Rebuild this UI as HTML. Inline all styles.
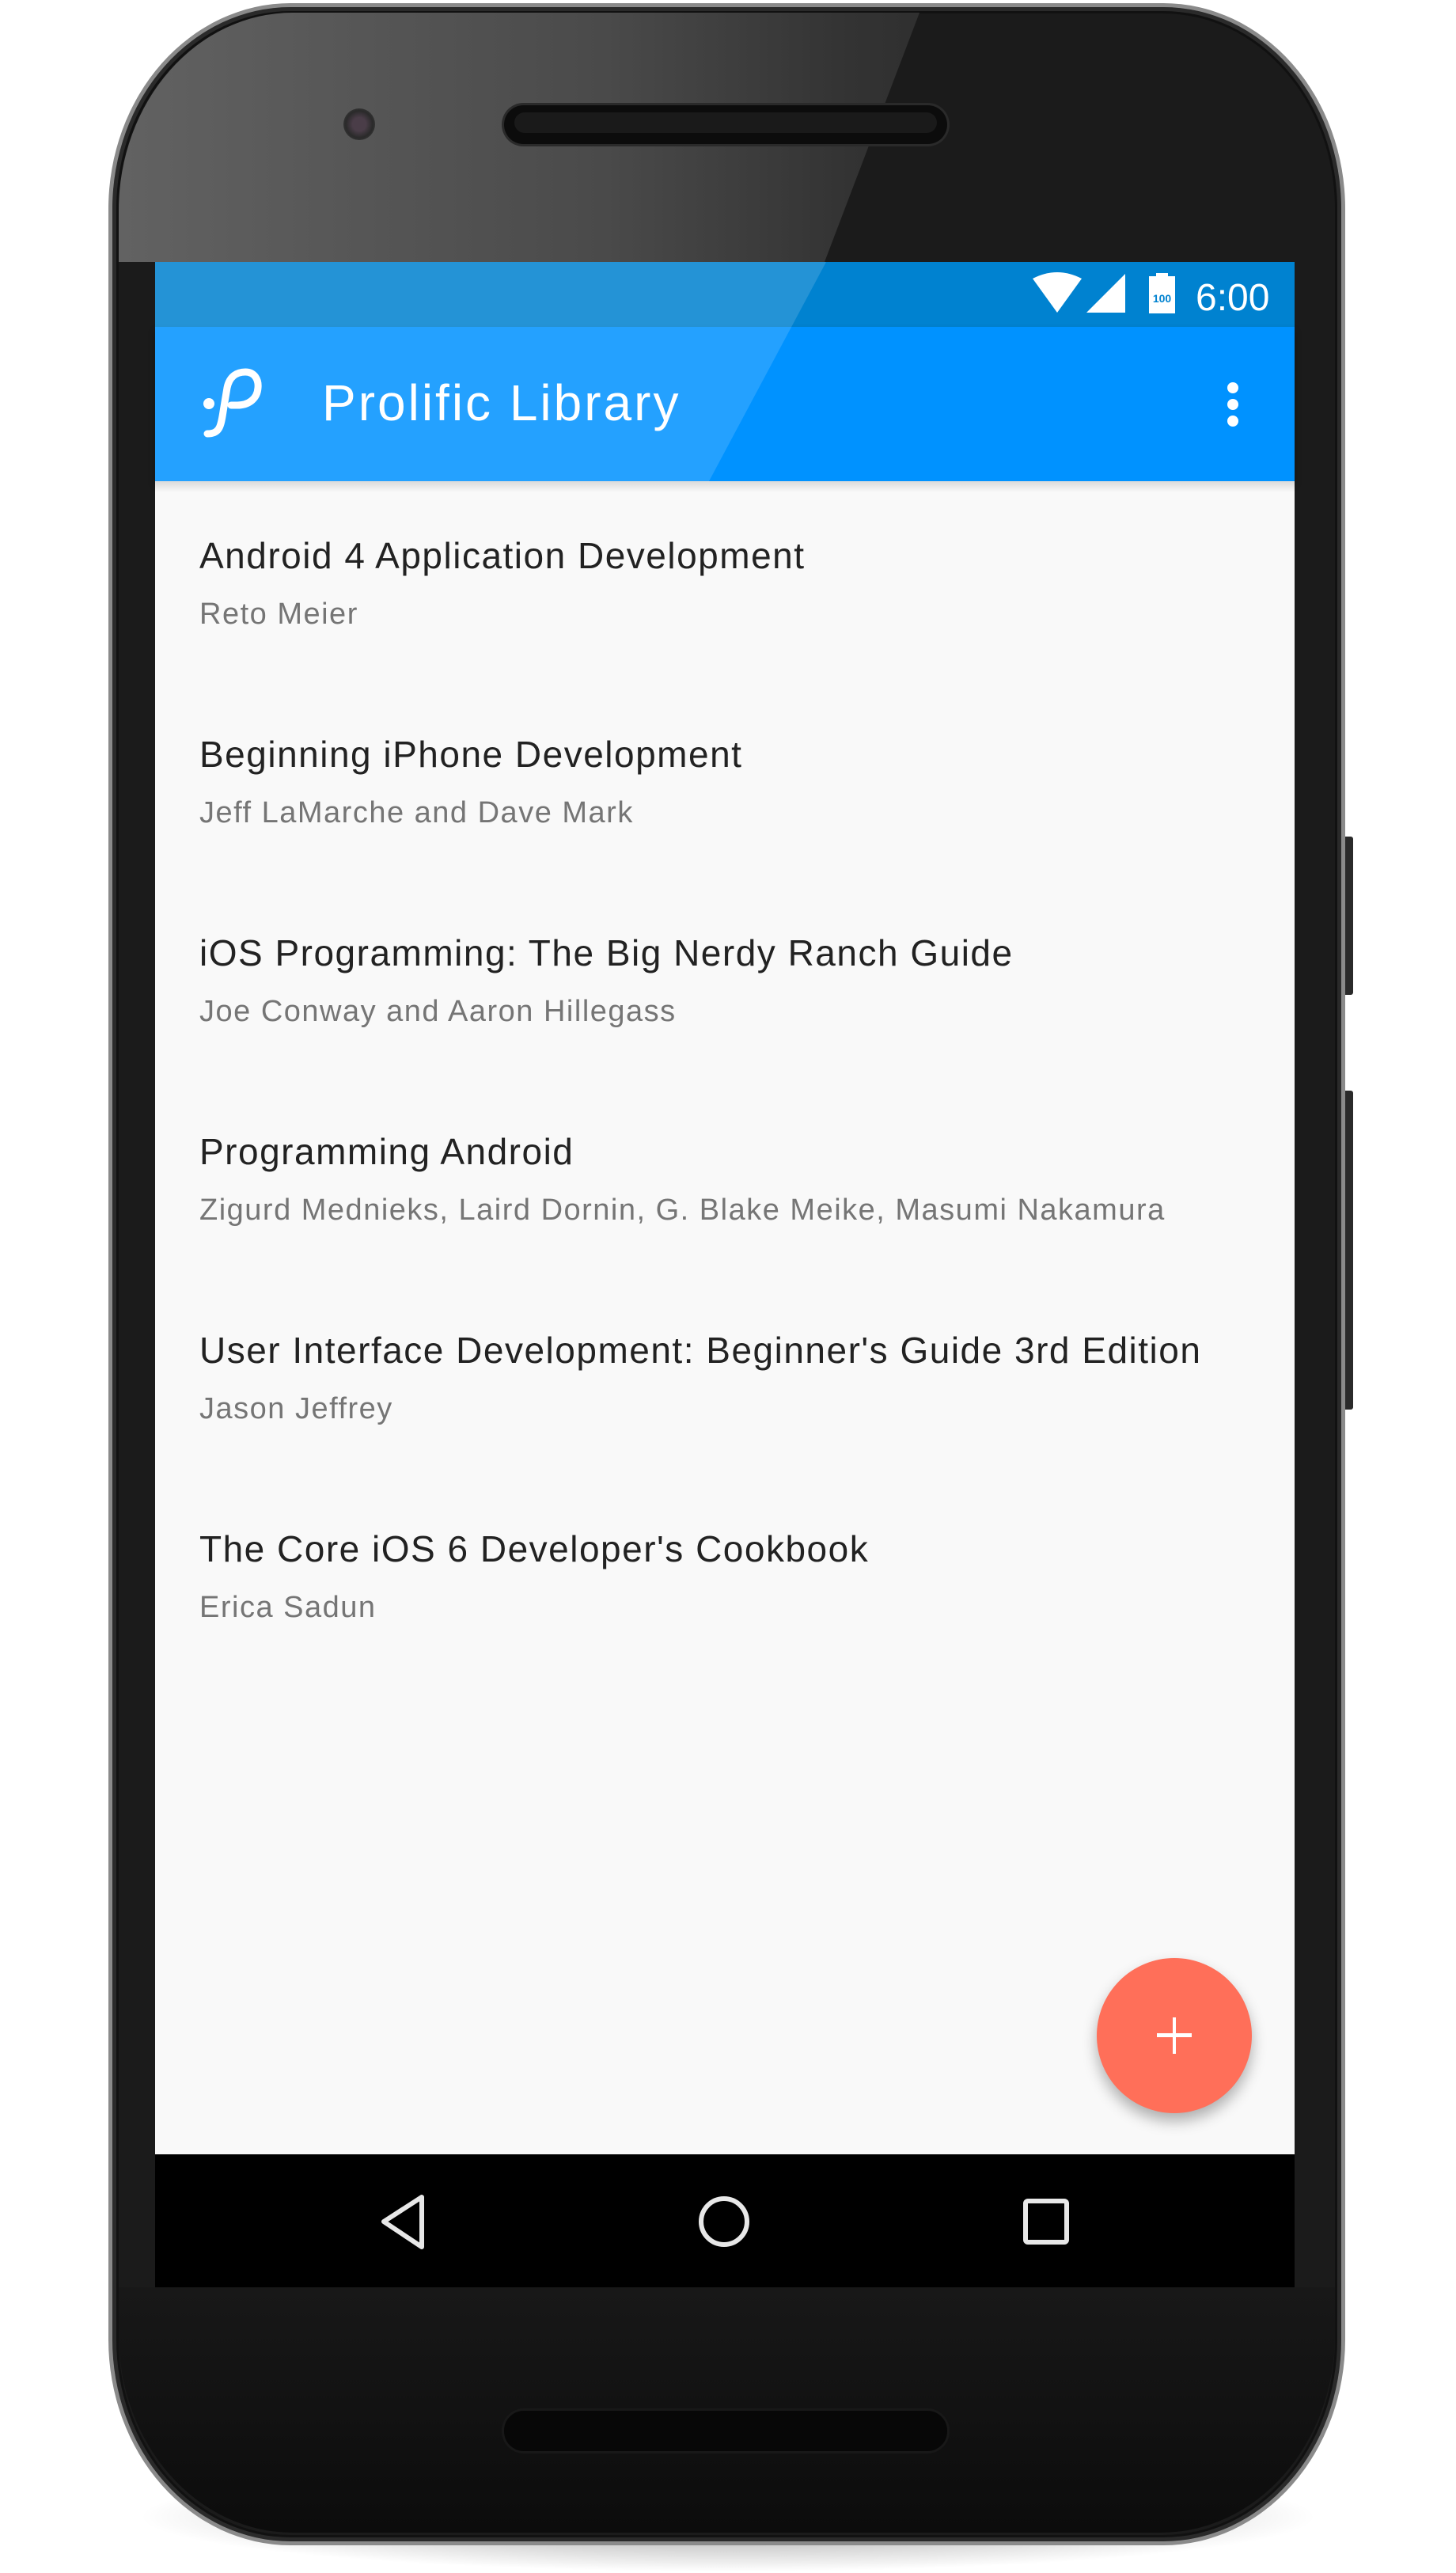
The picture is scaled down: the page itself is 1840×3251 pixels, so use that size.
<!DOCTYPE html>
<html><head><meta charset="utf-8"><style>
*{margin:0;padding:0;box-sizing:border-box}
body{width:1840px;height:3251px;background:#fff;position:relative;overflow:hidden;font-family:"Liberation Sans",sans-serif}
.abs{position:absolute}
#shadow{left:170px;top:3110px;width:1500px;height:140px;border-radius:50%;background:radial-gradient(ellipse at center,rgba(0,0,0,.4),rgba(0,0,0,0) 70%)}
#body{left:137px;top:4px;width:1563px;height:3212px;border-radius:230px/260px;background:#1b1b1b;border:5px solid #8a8a8a;box-shadow:inset 0 0 0 5px #2a2a2a,inset 0 0 0 8px #111}
#topglass{left:150px;top:16px;width:1537px;height:315px;border-radius:220px 220px 0 0/250px 250px 0 0;background:linear-gradient(90deg,#626262 0%,#4a4a4a 40%,#333 60%,#1c1c1c 100%);clip-path:polygon(0 0,1012px 0,892px 315px,0 315px)}
.screen{left:196px;width:1440px}
.btn{background:#2a2a2a;border-radius:3px}
.title{font-size:46px;color:#222;letter-spacing:1.5px;left:252px;position:absolute;white-space:nowrap}
.sub{font-size:38px;color:#757575;letter-spacing:1.5px;left:252px;position:absolute;white-space:nowrap}
</style></head><body>
<div class="abs" id="shadow"></div>
<div class="abs btn" style="left:1696px;top:1057px;width:14px;height:200px"></div>
<div class="abs btn" style="left:1696px;top:1378px;width:14px;height:403px"></div>
<div class="abs" id="body"></div>
<div class="abs" style="left:150px;top:2890px;width:1537px;height:310px;border-radius:0 0 220px 220px/0 0 250px 250px;background:linear-gradient(#181818,#0c0c0c)"></div>
<div class="abs" id="topglass"></div>
<div class="abs" style="left:637px;top:133px;width:560px;height:49px;border-radius:25px;background:#0c0c0c;box-shadow:0 0 0 3px #2a2a2a"></div>
<div class="abs" style="left:650px;top:142px;width:534px;height:26px;border-radius:13px;background:#1a1a1a"></div>
<div class="abs" style="left:637px;top:3046px;width:560px;height:51px;border-radius:25px;background:#070707;box-shadow:0 0 0 3px #181818"></div>
<div class="abs" style="left:434px;top:137px;width:40px;height:40px;border-radius:50%;background:radial-gradient(circle,#4a3d48 0 30%,#2a2a2a 60%,#444 100%)"></div>
<div class="abs screen" style="top:331px;height:82px;background:#0082D0"></div>
<div class="abs screen" style="top:413px;height:195px;background:#0092FF;box-shadow:0 5px 8px rgba(0,0,0,.25)"></div>
<div class="abs" style="left:196px;top:331px;width:1440px;height:277px;background:rgba(255,255,255,.14);clip-path:polygon(0 0,848px 0,700px 277px,0 277px)"></div>
<svg class="abs" style="left:1300px;top:340px" width="320" height="60" viewBox="1300 340 320 60">
<path d="M1305,352 Q1336,336 1367,352 L1336,395 Z" fill="#fff"/>
<path d="M1422,346 L1422,395 L1373,395 Z" fill="#fff"/>
<rect x="1452" y="349" width="33" height="47" fill="#fff"/><rect x="1461" y="345" width="15" height="5" fill="#fff"/>
<text x="1468.5" y="382" font-size="14" font-weight="bold" fill="#0082D0" text-anchor="middle" font-family="Liberation Sans Narrow,Liberation Sans,sans-serif">100</text>
<text x="1511" y="392" font-size="48" fill="#fff" font-family="Liberation Sans,sans-serif">6:00</text>
</svg>
<svg class="abs" style="left:240px;top:460px" width="110" height="100" viewBox="240 460 110 100">
<circle cx="264" cy="510" r="7" fill="#fff"/>
<path d="M262,548 C277,548 279,540 282,520 L287,490 C290,475 300,470 310,470 C322,470 327,480 326,490 C325,505 313,512 300,512 L292,512" fill="none" stroke="#fff" stroke-width="9" stroke-linecap="round"/>
</svg>
<div class="abs" style="left:407px;top:472px;font-size:64px;color:#fff;white-space:nowrap;letter-spacing:3px">Prolific Library</div>
<div class="abs" style="left:1551px;top:483px;width:14px;height:14px;border-radius:50%;background:#fff"></div>
<div class="abs" style="left:1551px;top:504px;width:14px;height:14px;border-radius:50%;background:#fff"></div>
<div class="abs" style="left:1551px;top:525px;width:14px;height:14px;border-radius:50%;background:#fff"></div>
<div class="abs screen" style="top:608px;height:2114px;background:#f9f9f9"></div>
<div class="abs" style="left:196px;top:608px;width:1440px;height:14px;background:linear-gradient(rgba(0,0,0,.12),rgba(0,0,0,0))"></div>
<div class="title" style="top:675px">Android 4 Application Development</div>
<div class="sub" style="top:755px">Reto Meier</div>
<div class="title" style="top:926px">Beginning iPhone Development</div>
<div class="sub" style="top:1006px">Jeff LaMarche and Dave Mark</div>
<div class="title" style="top:1177px">iOS Programming: The Big Nerdy Ranch Guide</div>
<div class="sub" style="top:1257px">Joe Conway and Aaron Hillegass</div>
<div class="title" style="top:1428px">Programming Android</div>
<div class="sub" style="top:1508px">Zigurd Mednieks, Laird Dornin, G. Blake Meike, Masumi Nakamura</div>
<div class="title" style="top:1679px">User Interface Development: Beginner's Guide 3rd Edition</div>
<div class="sub" style="top:1759px">Jason Jeffrey</div>
<div class="title" style="top:1930px">The Core iOS 6 Developer's Cookbook</div>
<div class="sub" style="top:2010px">Erica Sadun</div>
<div class="abs" style="left:1386px;top:2474px;width:196px;height:196px;border-radius:50%;background:#FF6F59;box-shadow:0 10px 18px rgba(0,0,0,.3)"></div>
<div class="abs" style="left:1462px;top:2569px;width:44px;height:5px;background:#fff"></div>
<div class="abs" style="left:1482px;top:2549px;width:4px;height:46px;background:#fff"></div>
<div class="abs screen" style="top:2722px;height:168px;background:#000"></div>
<svg class="abs" style="left:0;top:2740px" width="1840" height="140" viewBox="0 2740 1840 140">
<path d="M533,2776 L533,2839 L485,2807 Z" fill="none" stroke="#e8e8e8" stroke-width="6" stroke-linejoin="round"/>
<circle cx="915" cy="2807" r="29" fill="none" stroke="#e8e8e8" stroke-width="6"/>
<rect x="1296" y="2781" width="52" height="52" rx="3" fill="none" stroke="#e8e8e8" stroke-width="6"/>
</svg>
</body></html>
